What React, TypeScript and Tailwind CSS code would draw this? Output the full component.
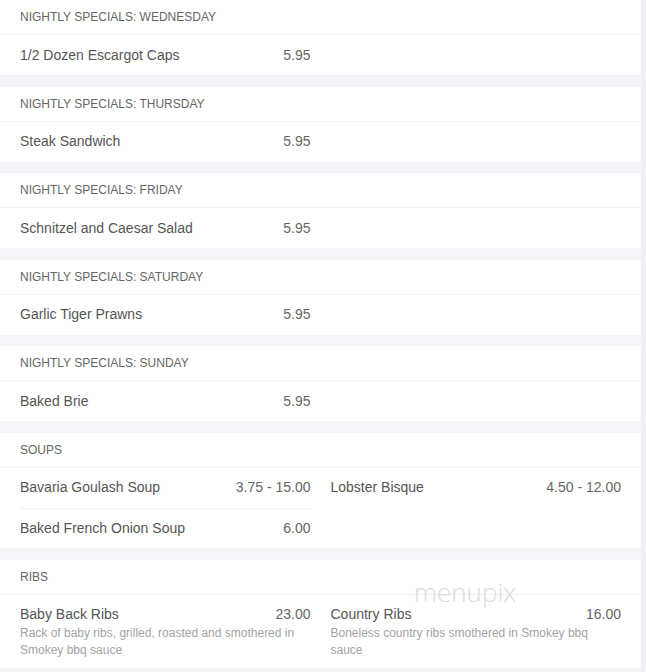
type Item = { name: string; price: string; desc?: string };

const specials: { title: string; item: Item }[] = [
  { title: 'NIGHTLY SPECIALS: WEDNESDAY', item: { name: '1/2 Dozen Escargot Caps', price: '5.95' } },
  { title: 'NIGHTLY SPECIALS: THURSDAY', item: { name: 'Steak Sandwich', price: '5.95' } },
  { title: 'NIGHTLY SPECIALS: FRIDAY', item: { name: 'Schnitzel and Caesar Salad', price: '5.95' } },
  { title: 'NIGHTLY SPECIALS: SATURDAY', item: { name: 'Garlic Tiger Prawns', price: '5.95' } },
  { title: 'NIGHTLY SPECIALS: SUNDAY', item: { name: 'Baked Brie', price: '5.95' } },
];

function Header({ title }: { title: string }) {
  return (
    <div className="h-[35px] flex items-center px-5 border-b border-[#eef0f3] text-[12px] text-[#666]">
      {title}
    </div>
  );
}

function Row({ item, divider }: { item: Item; divider?: boolean }) {
  return (
    <div className={`h-[40px] flex items-center justify-between text-[14px] ${divider ? 'border-t border-[#eef0f3]' : ''}`}>
      <span className="text-[#555]">{item.name}</span>
      <span className="text-[#666]">{item.price}</span>
    </div>
  );
}

function RibItem({ item }: { item: Item }) {
  return (
    <div className="pt-[10px]">
      <div className="flex justify-between text-[14px] leading-[19px]">
        <span className="text-[#555]">{item.name}</span>
        <span className="text-[#666]">{item.price}</span>
      </div>
      <p className="text-[12px] leading-[17px] text-[#a3a3a3] mt-[1px]">{item.desc}</p>
    </div>
  );
}

export default function App() {
  return (
    <div
      className="w-[646px] h-[672px] overflow-hidden bg-[#eff1f4] relative"
      style={{ fontFamily: '"Liberation Sans", Arial, sans-serif' }}
    >
      <div className="w-[641px] flex flex-col gap-[11.6px] bg-[#f4f5f8]">
        {specials.map((s) => (
          <div key={s.title} className="bg-white">
            <Header title={s.title} />
            <div className="px-5 grid grid-cols-2 gap-5">
              <Row item={s.item} />
            </div>
          </div>
        ))}

        <div className="bg-white">
          <Header title="SOUPS" />
          <div className="px-5 grid grid-cols-2 gap-5">
            <div className="flex flex-col">
              <Row item={{ name: 'Bavaria Goulash Soup', price: '3.75 - 15.00' }} />
              <Row item={{ name: 'Baked French Onion Soup', price: '6.00' }} divider />
            </div>
            <div className="flex flex-col">
              <Row item={{ name: 'Lobster Bisque', price: '4.50 - 12.00' }} />
            </div>
          </div>
        </div>

        <div className="bg-white h-[108px]">
          <Header title="RIBS" />
          <div className="px-5 grid grid-cols-2 gap-5">
            <RibItem
              item={{
                name: 'Baby Back Ribs',
                price: '23.00',
                desc: 'Rack of baby ribs, grilled, roasted and smothered in Smokey bbq sauce',
              }}
            />
            <RibItem
              item={{
                name: 'Country Ribs',
                price: '16.00',
                desc: 'Boneless country ribs smothered in Smokey bbq sauce',
              }}
            />
          </div>
        </div>
        <div className="h-[20px]" />
      </div>

      {/* watermark */}
      <span
        className="absolute left-[414px] top-[573px] text-[26px] font-light text-[#dcdcdc] select-none"
        style={{ fontFamily: '"Open Sans", sans-serif' }}
      >
        menupix
      </span>
    </div>
  );
}
